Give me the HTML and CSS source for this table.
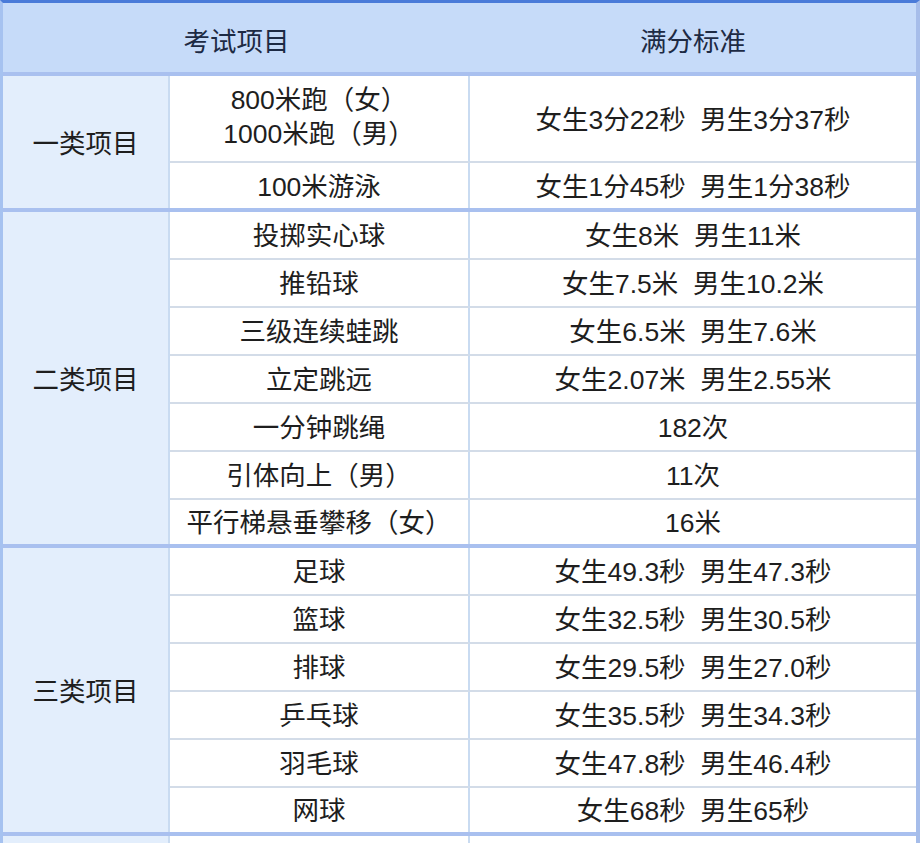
FILE: index.html
```html
<!DOCTYPE html>
<html lang="zh-CN">
<head>
<meta charset="utf-8">
<title>满分标准</title>
<link rel="stylesheet" href="styles.css">
</head>
<body>
<div class="table">
  <div class="head">
    <div class="hcell">考试项目</div>
    <div class="hcell">满分标准</div>
  </div>

  <div class="group g1">
    <div class="cat r2">一类项目</div>
    <div class="item"><span class="two">800米跑（女）<br>1000米跑（男）</span></div>
    <div class="std">女生3分22秒&nbsp; 男生3分37秒</div>
    <div class="item last">100米游泳</div>
    <div class="std last">女生1分45秒&nbsp; 男生1分38秒</div>
  </div>

  <div class="group g2">
    <div class="cat r7">二类项目</div>
    <div class="item">投掷实心球</div>
    <div class="std">女生8米&nbsp; 男生11米</div>
    <div class="item">推铅球</div>
    <div class="std">女生7.5米&nbsp; 男生10.2米</div>
    <div class="item">三级连续蛙跳</div>
    <div class="std">女生6.5米&nbsp; 男生7.6米</div>
    <div class="item">立定跳远</div>
    <div class="std">女生2.07米&nbsp; 男生2.55米</div>
    <div class="item">一分钟跳绳</div>
    <div class="std">182次</div>
    <div class="item">引体向上（男）</div>
    <div class="std">11次</div>
    <div class="item last">平行梯悬垂攀移（女）</div>
    <div class="std last">16米</div>
  </div>

  <div class="group g3">
    <div class="cat r6">三类项目</div>
    <div class="item">足球</div>
    <div class="std">女生49.3秒&nbsp; 男生47.3秒</div>
    <div class="item">篮球</div>
    <div class="std">女生32.5秒&nbsp; 男生30.5秒</div>
    <div class="item">排球</div>
    <div class="std">女生29.5秒&nbsp; 男生27.0秒</div>
    <div class="item">乒乓球</div>
    <div class="std">女生35.5秒&nbsp; 男生34.3秒</div>
    <div class="item">羽毛球</div>
    <div class="std">女生47.8秒&nbsp; 男生46.4秒</div>
    <div class="item last">网球</div>
    <div class="std last">女生68秒&nbsp; 男生65秒</div>
  </div>

  <div class="group g4">
    <div class="cat"></div>
    <div class="item last"></div>
    <div class="std last"></div>
  </div>
</div>
</body>
</html>
```

FILE: styles.css
```css
* {
  box-sizing: border-box;
}

html, body {
  margin: 0;
  padding: 0;
  background: #ffffff;
}

body {
  width: 920px;
  height: 843px;
  overflow: hidden;
  font-family: "Liberation Sans", "Noto Sans CJK SC", sans-serif;
  font-size: 26.5px;
  color: #1e1e1e;
}

.table {
  width: 920px;
  border-top: 3px solid #4a7bd9;
  border-left: 3px solid #a6c2f0;
  border-right: 4px solid #a6bdea;
}

.head {
  display: grid;
  grid-template-columns: 467px 446px;
  height: 73px;
  background: #c6dbf9;
  border-bottom: 4px solid #a9c0ef;
  color: #1d2a44;
}

.hcell {
  display: flex;
  align-items: center;
  justify-content: center;
  padding-top: 3px;
}

.group {
  display: grid;
  grid-template-columns: 167px 300px 446px;
  border-bottom: 4px solid #a9c0ef;
}

.g1 {
  grid-template-rows: 87px 45px;
}

.g2 {
  grid-template-rows: repeat(6, 48px) 44px;
}

.g3 {
  grid-template-rows: repeat(5, 48px) 44px;
}

.g4 {
  grid-template-rows: 46px;
  border-bottom: none;
}

.cat {
  background: #e3eefc;
  border-right: 2px solid #c9dbf1;
  display: flex;
  align-items: center;
  justify-content: center;
  padding-bottom: 2px;
}

.r2 { grid-row: span 2; }
.r6 { grid-row: span 6; }
.r7 { grid-row: span 7; }

.item,
.std {
  display: flex;
  align-items: center;
  justify-content: center;
  text-align: center;
  white-space: nowrap;
  border-bottom: 2px solid #d3dce8;
  padding-bottom: 3px;
}

.item {
  border-right: 2px solid #c9dbf1;
}

.last {
  border-bottom: none;
}

.two {
  line-height: 34px;
}
```
